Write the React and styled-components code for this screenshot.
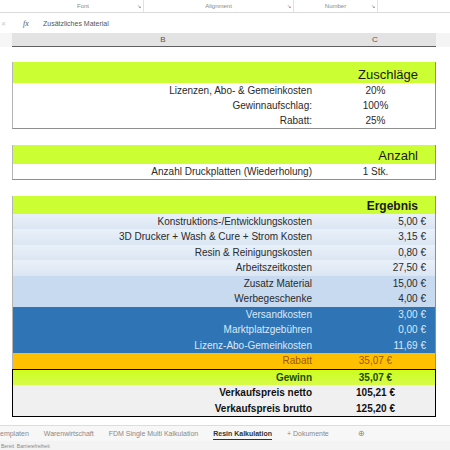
import styled, { createGlobalStyle } from "styled-components";

const GlobalStyle = createGlobalStyle`
  html, body {
    margin: 0;
    padding: 0;
    background: #ffffff;
    width: 450px;
    height: 450px;
    overflow: hidden;
    font-family: "Liberation Sans", Arial, sans-serif;
  }
`;

const zuschlaege = [
  { label: "Lizenzen, Abo- & Gemeinkosten", value: "20%" },
  { label: "Gewinnaufschlag:", value: "100%" },
  { label: "Rabatt:", value: "25%" },
];

const ergebnis = [
  { label: "Konstruktions-/Entwicklungskosten", value: "5,00 €", kind: "light" },
  { label: "3D Drucker + Wash & Cure + Strom Kosten", value: "3,15 €", kind: "light" },
  { label: "Resin & Reinigungskosten", value: "0,80 €", kind: "light" },
  { label: "Arbeitszeitkosten", value: "27,50 €", kind: "light" },
  { label: "Zusatz Material", value: "15,00 €", kind: "mid" },
  { label: "Werbegeschenke", value: "4,00 €", kind: "mid" },
  { label: "Versandkosten", value: "3,00 €", kind: "dark" },
  { label: "Marktplatzgebühren", value: "0,00 €", kind: "dark" },
  { label: "Lizenz-Abo-Gemeinkosten", value: "11,69 €", kind: "dark" },
];

const totals = [
  { label: "Gewinn", value: "35,07 €", kind: "gewinn" },
  { label: "Verkaufspreis netto", value: "105,21 €", kind: "gray" },
  { label: "Verkaufspreis brutto", value: "125,20 €", kind: "gray" },
];

const tabs = [
  { name: "emplaten" },
  { name: "Warenwirtschaft" },
  { name: "FDM Single Multi Kalkulation" },
  { name: "Resin Kalkulation", active: true },
  { name: "+ Dokumente" },
];

const rowStyles = {
  light: { bg: "linear-gradient(#e9f0f9, #dbe6f3)", color: "#2a2a2a" },
  mid: { bg: "#c8daef", color: "#2a2a2a" },
  dark: { bg: "#2f74b5", color: "#dce9f7" },
  rabatt: { bg: "#ffc000", color: "#9c5700" },
  gewinn: { bg: "linear-gradient(#ccff1f, #d6fb4a)", color: "#1d4a00" },
  gray: { bg: "#f0f0f0", color: "#111" },
};

export default function App() {
  return (
    <Page>
      <GlobalStyle />
      <Ribbon>
        <Launcher $w={23} />
        <RibbonGroup $w={121}>
          Font
          <Launcher as="span" $inline>↘</Launcher>
        </RibbonGroup>
        <RibbonGroup $w={150}>
          Alignment
          <Launcher as="span" $inline>↘</Launcher>
        </RibbonGroup>
        <RibbonGroup $w={84}>
          Number
          <Launcher as="span" $inline>↘</Launcher>
        </RibbonGroup>
      </Ribbon>

      <FormulaBar>
        <NameBox>✕</NameBox>
        <Fx>fx</Fx>
        <FormulaText>Zusätzliches Material</FormulaText>
      </FormulaBar>

      <ColumnHeader>
        <CornerStub />
        <ColHead $w={302}>B</ColHead>
        <ColHead $w={122}>C</ColHead>
      </ColumnHeader>

      <Sheet>
        <Table>
          <HeaderRow $h={21}>
            <span />
            <HeaderText>Zuschläge</HeaderText>
          </HeaderRow>
          {zuschlaege.map((r) => (
            <Row key={r.label} $h={15}>
              <Label>{r.label}</Label>
              <Value $align="center">{r.value}</Value>
            </Row>
          ))}
        </Table>

        <Table>
          <HeaderRow $h={19}>
            <span />
            <HeaderText>Anzahl</HeaderText>
          </HeaderRow>
          <Row $h={15}>
            <Label>Anzahl Druckplatten (Wiederholung)</Label>
            <Value $align="center">1 Stk.</Value>
          </Row>
        </Table>

        <Table>
          <HeaderRow $h={18}>
            <span />
            <HeaderText $bold>Ergebnis</HeaderText>
          </HeaderRow>
          {ergebnis.map((r) => (
            <Row
              key={r.label}
              $h={15.5}
              $bg={rowStyles[r.kind].bg}
              $color={rowStyles[r.kind].color}
            >
              <Label>{r.label}</Label>
              <Value $align="right">{r.value}</Value>
            </Row>
          ))}
          <Row $h={15.5} $bg={rowStyles.rabatt.bg} $color={rowStyles.rabatt.color}>
            <Label>Rabatt</Label>
            <Value $align="center">35,07 €</Value>
          </Row>
          <TotalsBlock>
            {totals.map((r) => (
              <Row
                key={r.label}
                $h={15.5}
                $bg={rowStyles[r.kind].bg}
                $color={rowStyles[r.kind].color}
                $bold
              >
                <Label>{r.label}</Label>
                <Value $align="center">{r.value}</Value>
              </Row>
            ))}
          </TotalsBlock>
        </Table>
      </Sheet>

      <TabBar>
        {tabs.map((t) => (
          <Tab key={t.name} $active={t.active}>
            {t.name}
          </Tab>
        ))}
        <AddTab>⊕</AddTab>
      </TabBar>
      <StatusBar>Bereit&nbsp;&nbsp;Barrierefreiheit</StatusBar>
    </Page>
  );
}

const Page = styled.div`
  width: 450px;
  height: 450px;
  display: flex;
  flex-direction: column;
  background: #ffffff;
`;

const Ribbon = styled.div`
  height: 13px;
  display: flex;
  align-items: center;
  border-bottom: 1px solid #dadada;
  font-size: 6px;
  color: #888;
`;

const RibbonGroup = styled.div`
  width: ${(p) => p.$w}px;
  height: 12px;
  display: flex;
  align-items: center;
  justify-content: center;
  position: relative;
  border-right: 1px solid #e2e2e2;
  box-sizing: border-box;
`;

const Launcher = styled.div`
  width: ${(p) => (p.$w ? `${p.$w}px` : "auto")};
  height: 12px;
  font-size: 5px;
  color: #777;
  ${(p) =>
    p.$inline &&
    `
    position: absolute;
    right: 2px;
    top: 3px;
    height: auto;
  `}
`;

const FormulaBar = styled.div`
  height: 19px;
  margin-top: 1px;
  display: flex;
  align-items: center;
  font-size: 7px;
  color: #444;
`;

const NameBox = styled.div`
  width: 22px;
  padding-left: 1px;
  color: #c8c8c8;
  font-size: 6px;
`;

const Fx = styled.div`
  width: 20px;
  font-family: "Liberation Serif", serif;
  font-style: italic;
  font-size: 8px;
  color: #555;
`;

const FormulaText = styled.div`
  color: #555;
`;

const ColumnHeader = styled.div`
  margin-top: 1px;
  height: 14px;
  display: flex;
  background: #f4f4f4;
`;

const CornerStub = styled.div`
  width: 12px;
  background: #f6f6f6;
`;

const ColHead = styled.div`
  width: ${(p) => p.$w}px;
  background: #e3e3e3;
  border-bottom: 1px solid #5f5f5f;
  box-sizing: border-box;
  display: flex;
  align-items: center;
  justify-content: center;
  font-size: 8px;
  color: #555;
`;

const Sheet = styled.div`
  padding: 15px 0 0 12px;
  display: flex;
  flex-direction: column;
  gap: 16px;
  flex: 1;
`;

const Table = styled.div`
  width: 424px;
  display: flex;
  flex-direction: column;
  border-left: 1px solid #b5b5b5;
  border-right: 1px solid #8f8f8f;
  border-bottom: 1px solid #8f8f8f;
  box-sizing: border-box;
`;

const Row = styled.div`
  height: ${(p) => p.$h}px;
  display: grid;
  grid-template-columns: 301px 1fr;
  align-items: center;
  background: ${(p) => p.$bg || "#ffffff"};
  color: ${(p) => p.$color || "#2a2a2a"};
  font-size: 10px;
  font-weight: ${(p) => (p.$bold ? 700 : 400)};
  white-space: nowrap;
`;

const HeaderRow = styled(Row)`
  background: #ccff33;
  align-items: end;
`;

const HeaderText = styled.div`
  text-align: right;
  padding-right: 17px;
  padding-bottom: 1px;
  font-size: ${(p) => (p.$bold ? 12 : 13)}px;
  font-weight: ${(p) => (p.$bold ? 700 : 400)};
  color: #1a1a1a;
`;

const Label = styled.div`
  text-align: right;
  padding-right: 2px;
`;

const Value = styled.div`
  text-align: ${(p) => p.$align};
  padding-right: ${(p) => (p.$align === "right" ? "9px" : "0")};
  padding-left: ${(p) => (p.$align === "center" ? "2px" : "0")};
`;

const TotalsBlock = styled.div`
  display: flex;
  flex-direction: column;
  border: 1.5px solid #000;
  margin: 0 -1px -1px -1px;
`;

const TabBar = styled.div`
  margin-top: 8px;
  height: 16px;
  display: flex;
  align-items: center;
  gap: 15px;
  border-top: 1px solid #dcdcdc;
  background: #f7f7f7;
  font-size: 7px;
  color: #8a8a8a;
`;

const Tab = styled.div`
  padding: 2px 0;
  white-space: nowrap;
  font-weight: ${(p) => (p.$active ? 700 : 400)};
  color: ${(p) => (p.$active ? "#333" : "#8a8a8a")};
  border-bottom: ${(p) => (p.$active ? "1.5px solid #333" : "1.5px solid transparent")};
`;

const AddTab = styled.div`
  margin-left: 14px;
  font-size: 8px;
  color: #888;
`;

const StatusBar = styled.div`
  height: 9px;
  padding-left: 1px;
  background: #f3f3f3;
  font-size: 5px;
  color: #888;
  display: flex;
  align-items: center;
`;
